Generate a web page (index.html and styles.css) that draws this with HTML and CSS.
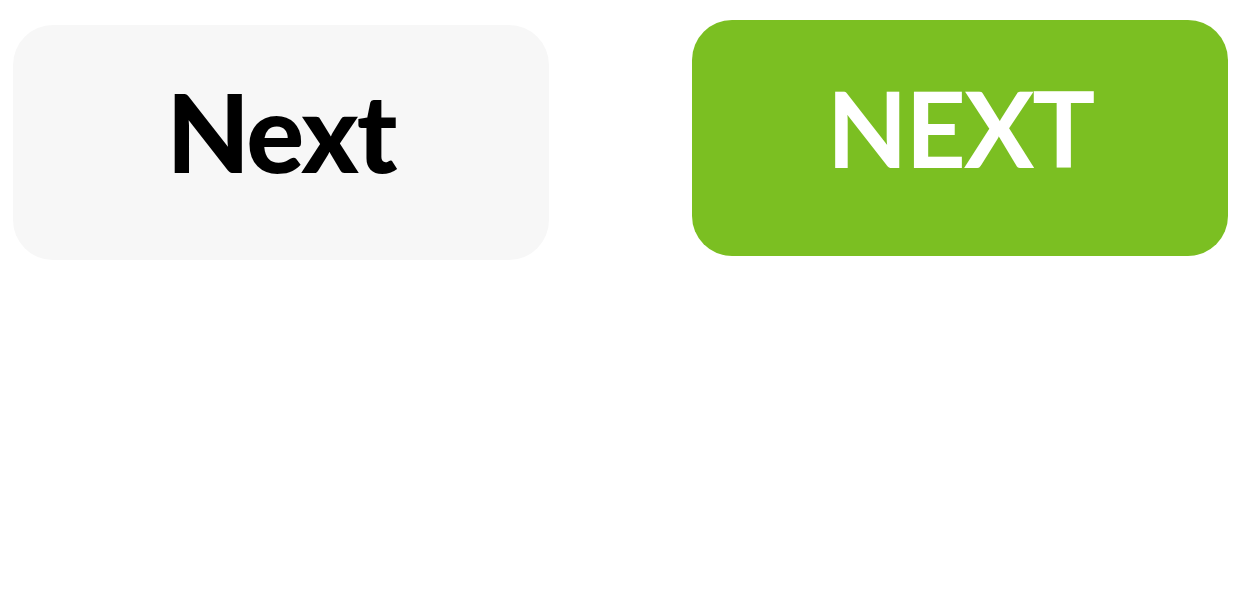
FILE: index.html
```html
<!DOCTYPE html>
<html lang="en">
<head>
    <meta charset="UTF-8">
    <meta name="viewport" content="width=device-width, initial-scale=1.0">
    <title>Next buttons</title>
    <link rel="stylesheet" href="styles.css">
</head>
<body>
    <!-- Button samples -->
    <div class="buttons">
        <button class="btn btn-light">Next</button>
        <button class="btn btn-green">NEXT</button>
    </div>
</body>
</html>
```
FILE: styles.css
```css
/* Global Styles */
* {
    margin: 0;
    padding: 0;
    box-sizing: border-box;
}

body {
    font-family: Lato, "Noto Sans", sans-serif;
    background-color: #fff;
    width: 1240px;
    height: 590px;
}

/* Button row */
.buttons {
    display: flex;
    align-items: flex-start;
    gap: 143px;
    padding: 20px 12px 0 13px;
}

.btn {
    width: 536px;
    height: 236px;
    border: none;
    border-radius: 40px;
    font-family: Lato, "Noto Sans", sans-serif;
    display: flex;
    justify-content: center;
    align-items: center;
    cursor: pointer;
}

/* Grey button, mixed case */
.btn-light {
    margin-top: 5px;
    height: 235px;
    background-color: #f7f7f7;
    color: #000;
    font-size: 108px;
    font-weight: 900;
    letter-spacing: -2px;
    padding-bottom: 24px;
}

/* Green button, caps */
.btn-green {
    background-color: #7bbf22;
    color: #fff;
    font-size: 105px;
    font-weight: 700;
    letter-spacing: -2px;
    padding-bottom: 23px;
}
```
